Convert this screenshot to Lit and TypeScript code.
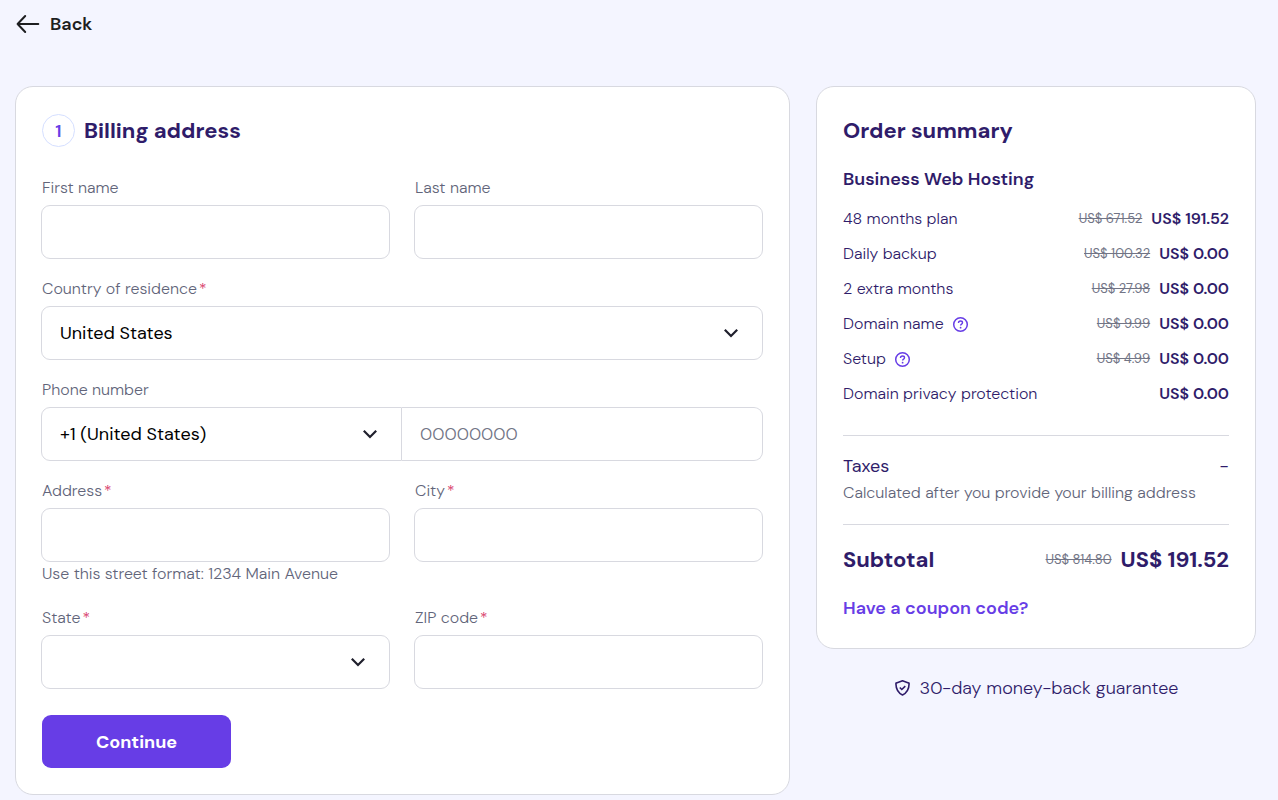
import { LitElement, html, css, svg, nothing } from "lit";
import { customElement, property } from "lit/decorators.js";

interface OrderLine {
  name: string;
  was?: string;
  now: string;
  help?: boolean;
}

const ORDER_LINES: OrderLine[] = [
  { name: "48 months plan", was: "US$ 671.52", now: "US$ 191.52" },
  { name: "Daily backup", was: "US$ 100.32", now: "US$ 0.00" },
  { name: "2 extra months", was: "US$ 27.98", now: "US$ 0.00" },
  { name: "Domain name", was: "US$ 9.99", now: "US$ 0.00", help: true },
  { name: "Setup", was: "US$ 4.99", now: "US$ 0.00", help: true },
  { name: "Domain privacy protection", now: "US$ 0.00" },
];

const chevron = html`<svg class="chevron" width="16" height="16" viewBox="0 0 16 16" fill="none" aria-hidden="true">
  ${svg`<path d="M1.8 4.8 8 11l6.2-6.2" stroke="#1f1f2c" stroke-width="2.2" />`}
</svg>`;

const shared = css`
  *,
  *::before,
  *::after {
    box-sizing: border-box;
  }
  h1,
  h2,
  h3,
  p,
  ul {
    margin: 0;
    padding: 0;
  }
  button,
  input,
  select {
    font-family: inherit;
    margin: 0;
  }
  .card {
    background: #fff;
    border: 1px solid #d8d9e0;
    border-radius: 18px;
  }
  .title {
    font-size: 22px;
    line-height: 33px;
    font-weight: 700;
    color: #2f1c6a;
  }
`;

@customElement("billing-form")
export class BillingForm extends LitElement {
  static styles = [
    shared,
    css`
      :host {
        display: block;
      }
      .card {
        padding: 27px 26px 26px 25px;
      }
      .head {
        display: flex;
        align-items: center;
        gap: 9px;
        padding-left: 1px;
        margin-bottom: 29px;
      }
      .step {
        flex: none;
        width: 33px;
        height: 33px;
        border: 1px solid #d5dfff;
        border-radius: 50%;
        display: grid;
        place-items: center;
        font-size: 18px;
        font-weight: 600;
        color: #673de6;
      }
      .form {
        display: grid;
        grid-template-columns: repeat(2, minmax(0, 1fr));
        gap: 18px 24px;
      }
      .wide {
        grid-column: 1 / -1;
      }
      .label {
        display: block;
        width: fit-content;
        padding-left: 1px;
        margin-bottom: 5px;
        font-size: 16px;
        font-weight: 300;
        line-height: 24px;
        color: #62657a;
      }
      .req {
        margin-left: 2px;
        color: #d63163;
      }
      .control {
        display: block;
        width: 100%;
        height: 54px;
        padding: 0 18px;
        border: 1px solid #d8d9e0;
        border-radius: 9px;
        background: #fff;
        color: #000;
        font-size: 18px;
        outline-color: #673de6;
      }
      .control::placeholder {
        color: #727586;
        font-weight: 300;
        opacity: 1;
      }
      select.control {
        appearance: none;
        padding-right: 48px;
      }
      .select {
        display: grid;
        align-items: center;
      }
      .select > * {
        grid-area: 1 / 1;
      }
      .chevron {
        justify-self: end;
        margin-right: 24px;
        pointer-events: none;
      }
      .phone {
        display: grid;
        grid-template-columns: repeat(2, minmax(0, 1fr));
      }
      .phone select {
        border-radius: 9px 0 0 9px;
      }
      .phone input {
        border-left: 0;
        border-radius: 0 9px 9px 0;
      }
      .hint {
        padding: 0 0 2px 1px;
        font-size: 16px;
        font-weight: 300;
        line-height: 24px;
        color: #62657a;
      }
      .actions {
        padding: 8px 0 0 1px;
      }
      .submit {
        height: 53px;
        padding: 0 54px;
        border: 0;
        border-radius: 9px;
        background: #673de6;
        color: #fff;
        font-size: 18px;
        font-weight: 700;
        cursor: pointer;
      }
    `,
  ];

  private label(id: string, text: string, required = false) {
    return html`<label class="label" for=${id}
      >${text}${required ? html`<span class="req">*</span>` : nothing}</label
    >`;
  }

  private text(id: string, text: string, required = false, hint = "") {
    return html`<div>
      ${this.label(id, text, required)}
      <input class="control" id=${id} type="text" ?required=${required} />
      ${hint ? html`<p class="hint">${hint}</p>` : nothing}
    </div>`;
  }

  render() {
    return html`<section class="card">
      <header class="head">
        <span class="step">1</span>
        <h1 class="title">Billing address</h1>
      </header>
      <form class="form" @submit=${(e: Event) => e.preventDefault()}>
        ${this.text("first", "First name")} ${this.text("last", "Last name")}
        <div class="wide">
          ${this.label("country", "Country of residence", true)}
          <div class="select">
            <select class="control" id="country">
              <option>United States</option>
            </select>
            ${chevron}
          </div>
        </div>
        <div class="wide">
          ${this.label("phone", "Phone number")}
          <div class="phone">
            <div class="select">
              <select class="control" aria-label="Country code">
                <option>+1 (United States)</option>
              </select>
              ${chevron}
            </div>
            <input class="control" id="phone" type="tel" placeholder="00000000" />
          </div>
        </div>
        ${this.text("address", "Address", true, "Use this street format: 1234 Main Avenue")}
        ${this.text("city", "City", true)}
        <div>
          ${this.label("state", "State", true)}
          <div class="select">
            <select class="control" id="state">
              <option></option>
            </select>
            ${chevron}
          </div>
        </div>
        ${this.text("zip", "ZIP code", true)}
        <div class="actions wide">
          <button class="submit" type="submit">Continue</button>
        </div>
      </form>
    </section>`;
  }
}

@customElement("order-summary")
export class OrderSummary extends LitElement {
  static styles = [
    shared,
    css`
      :host {
        display: block;
        color: #2f1c6a;
      }
      .card {
        padding: 27px 26px;
      }
      .plan {
        margin: 19px 0 15px;
        font-size: 18px;
        line-height: 26px;
        font-weight: 600;
      }
      .lines {
        list-style: none;
        display: grid;
        gap: 11px;
      }
      .line {
        display: flex;
        align-items: center;
        font-size: 16px;
        font-weight: 300;
        line-height: 24px;
      }
      .help {
        display: grid;
        margin-left: 8px;
        padding: 0;
        border: 0;
        background: none;
        cursor: pointer;
      }
      .was {
        margin-left: auto;
        font-size: 13px;
        font-weight: 400;
        color: #727586;
      }
      .now {
        margin-left: 9px;
        font-weight: 600;
      }
      .name + .now,
      .end {
        margin-left: auto;
      }
      .rule {
        height: 1px;
        border: 0;
        background: #d8d9e0;
      }
      .rule-top {
        margin: 29px 0 17px;
      }
      .rule-bottom {
        margin: 19px 0;
      }
      .taxes {
        display: flex;
        font-size: 18px;
        line-height: 26px;
      }
      .note {
        margin-top: 2px;
        font-size: 16px;
        font-weight: 300;
        line-height: 24px;
        color: #62657a;
      }
      .total {
        display: flex;
        align-items: center;
        line-height: 32px;
      }
      .total-name,
      .total-now {
        font-size: 22px;
        font-weight: 700;
      }
      .total-now {
        margin-left: 9px;
      }
      .coupon {
        display: block;
        width: fit-content;
        margin-top: 19px;
        font-size: 18px;
        line-height: 26px;
        font-weight: 600;
        color: #673de6;
        text-decoration: none;
      }
      .guarantee {
        display: flex;
        align-items: center;
        justify-content: center;
        gap: 9px;
        margin-top: 26px;
        font-size: 18px;
        line-height: 26px;
        font-weight: 300;
      }
    `,
  ];

  private line(item: OrderLine) {
    return html`<li class="line">
      <span class="name">${item.name}</span>
      ${item.help
        ? html`<button class="help" type="button" aria-label=${`About ${item.name}`}>
            <svg width="17" height="17" viewBox="0 0 17 17" fill="none" stroke="#673de6" aria-hidden="true">
              <circle cx="8.5" cy="8.5" r="6.8" stroke-width="1.5" />
              <path d="M6.5 6.900c0-1.100.8-1.900 2-1.900s2 .8 2 1.700c0 1.400-1.900 1.500-1.900 2.900" stroke-width="1.4" />
              <circle cx="8.6" cy="11.7" r=".9" fill="#673de6" stroke="none" />
            </svg>
          </button>`
        : nothing}
      ${item.was ? html`<s class="was">${item.was}</s>` : nothing}
      <span class="now">${item.now}</span>
    </li>`;
  }

  render() {
    return html`<section class="card">
        <h2 class="title">Order summary</h2>
        <h3 class="plan">Business Web Hosting</h3>
        <ul class="lines">
          ${ORDER_LINES.map((item) => this.line(item))}
        </ul>
        <hr class="rule rule-top" />
        <div class="taxes"><span>Taxes</span><span class="end">-</span></div>
        <p class="note">Calculated after you provide your billing address</p>
        <hr class="rule rule-bottom" />
        <div class="total">
          <span class="total-name">Subtotal</span>
          <s class="was">US$ 814.80</s>
          <span class="total-now">US$ 191.52</span>
        </div>
        <a class="coupon" href="#coupon">Have a coupon code?</a>
      </section>
      <p class="guarantee">
        <svg width="17" height="18" viewBox="0 0 17 18" fill="none" stroke="#2f1c6a" aria-hidden="true">
          <path
            d="M8.5 1.800 2.500 3.900c-.4.100-.6.500-.6.900.1 5 1.900 9 6.600 11.200 4.700-2.200 6.500-6.200 6.600-11.200 0-.4-.2-.8-.6-.9Z"
            stroke-width="1.6"
            stroke-linejoin="round"
          />
          <path d="m5.8 8.500 2 2 3.500-3.400" stroke-width="1.6" />
        </svg>
        <span>30-day money-back guarantee</span>
      </p>`;
  }
}

@customElement("app-root")
export class AppRoot extends LitElement {
  @property() backHref = "#back";

  static styles = css`
    :host {
      display: block;
      box-sizing: border-box;
      min-height: 100vh;
      padding: 11px 22px 5px 15px;
      background: #f4f5ff;
      font-family: "DM Sans", Inter, "Liberation Sans", sans-serif;
    }
    .back {
      display: flex;
      align-items: center;
      gap: 10px;
      width: fit-content;
      margin-bottom: 49px;
      font-size: 18px;
      line-height: 26px;
      font-weight: 600;
      color: #1d1e20;
      text-decoration: none;
    }
    .columns {
      display: grid;
      grid-template-columns: minmax(0, 1fr) 440px;
      align-items: start;
      gap: 26px;
    }
    @media (max-width: 900px) {
      .columns {
        grid-template-columns: minmax(0, 1fr);
      }
    }
  `;

  render() {
    return html`<a class="back" href=${this.backHref}>
        <svg width="25" height="20" viewBox="0 0 25 20" fill="none" aria-hidden="true">
          <path
            d="M10.2 2 2.600 10l7.600 8M2.600 10H23.300"
            stroke="#1d1e20"
            stroke-width="2"
            stroke-linecap="round"
            stroke-linejoin="round"
          />
        </svg>
        <span>Back</span>
      </a>
      <main class="columns">
        <billing-form></billing-form>
        <order-summary></order-summary>
      </main>`;
  }
}
